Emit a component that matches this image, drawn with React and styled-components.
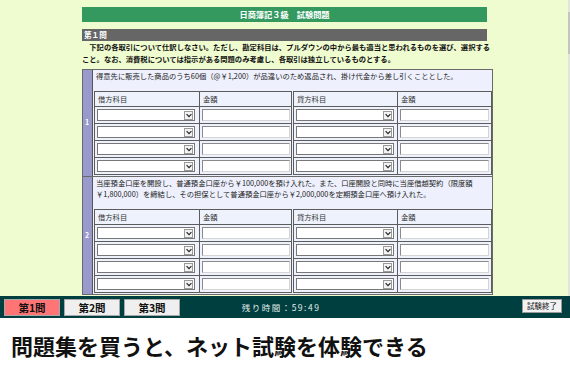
import React from "react";
import styled, { createGlobalStyle } from "styled-components";

const Global = createGlobalStyle`
  html, body { margin: 0; padding: 0; background: #ffffff; }
  body { font-family: "Noto Sans CJK JP", "Noto Sans", sans-serif; color: #111; }
  * { box-sizing: border-box; }
`;

const Page = styled.div`
  width: 570px;
  height: 370px;
  display: flex;
  flex-direction: column;
  overflow: hidden;
`;

const ExamWindow = styled.div`
  height: 296px;
  display: flex;
  background: #effcd0;
  overflow: hidden;
`;

const Main = styled.div`
  flex: 1;
  padding: 7px 0 0 82px;
  display: flex;
  flex-direction: column;
`;

const ScrollTrack = styled.div`
  width: 2px;
  background: #e2e4de;
  padding-top: 12px;
`;

const ScrollThumb = styled.div`
  height: 42px;
  background: #c4c4c4;
`;

const TitleBar = styled.div`
  width: 405px;
  height: 15px;
  background: #33995f;
  color: #fff;
  font-weight: 700;
  font-size: 8.2px;
  line-height: 15px;
  text-align: center;
  white-space: pre;
`;

const SectionBar = styled.div`
  width: 405px;
  height: 12px;
  margin-top: 7px;
  background: #666666;
  color: #fff;
  font-weight: 700;
  font-size: 7.6px;
  line-height: 12px;
  padding-left: 2px;
`;

const Instructions = styled.p`
  margin: 0;
  width: 402px;
  font-size: 7.3px;
  font-weight: 700;
  line-height: 12px;
  white-space: pre;
  color: #111;
`;

const QuestionList = styled.div`
  margin-top: 4px;
  width: 411px;
  border: 1px solid #6a6a6a;
  background: #eef1fd;
`;

const QuestionRow = styled.div`
  display: grid;
  grid-template-columns: 10px 1fr;
  & + & { border-top: 1px solid #6a6a6a; }
`;

const NumberCell = styled.div`
  background: #9999cc;
  border-right: 1px solid #555;
  color: #fff;
  font-weight: 700;
  font-size: 7px;
  display: flex;
  align-items: center;
  padding: 0 0 2px 2px;
`;

const QuestionBody = styled.div`
  padding: 1px;
`;

const QuestionText = styled.div`
  font-size: 7.3px;
  line-height: 11px;
  padding-left: 2px;
  white-space: nowrap;
  color: #222;
`;

const Table = styled.table`
  margin-top: 9px;
  width: 397px;
  border-collapse: collapse;
  table-layout: fixed;
`;

const Th = styled.th`
  height: 15px;
  padding: 0 0 0 3px;
  border: 1px solid #5c5c5c;
  border-left: ${(p) => (p.$split ? "3px double #5c5c5c" : "1px solid #5c5c5c")};
  background: #eef2fc;
  font-size: 7.3px;
  font-weight: 400;
  text-align: left;
  color: #333;
`;

const Td = styled.td`
  height: 17px;
  padding: 0 2px;
  border: 1px solid #5c5c5c;
  border-left: ${(p) => (p.$split ? "3px double #5c5c5c" : "1px solid #5c5c5c")};
  background: #eef2fc;
  vertical-align: middle;
`;

const SelectBox = styled.div`
  width: 98px;
  height: 12px;
  border: 1px solid #777;
  background: #fff;
  display: flex;
  justify-content: flex-end;
  align-items: center;
  padding-right: 1px;
`;

const ArrowBox = styled.div`
  width: 9px;
  height: 9px;
  border: 1px solid #9a9a9a;
  background: #f3f3f3;
  display: flex;
  align-items: center;
  justify-content: center;
`;

const InputBox = styled.div`
  width: ${(p) => p.$w}px;
  height: 12px;
  background: #fff;
  border: 1px solid;
  border-color: #8a8a8a #d4d4d4 #d4d4d4 #8a8a8a;
`;

const BottomBar = styled.div`
  height: 22px;
  background: #003f3f;
  display: grid;
  grid-template-columns: 1fr auto 1fr;
  align-items: start;
  padding: 3px 8px 0 4px;
`;

const TabGroup = styled.div`
  display: flex;
  gap: 4px;
`;

const TabButton = styled.div`
  width: 56px;
  height: 17px;
  background: ${(p) => (p.$active ? "#ff7575" : "#efefef")};
  border: 1px solid #a8a8a8;
  font-size: 10.5px;
  font-weight: 700;
  line-height: 15px;
  text-align: center;
  color: #111;
`;

const Timer = styled.div`
  color: #e4ecec;
  font-size: 8.5px;
  letter-spacing: 1.5px;
  line-height: 16px;
  margin-right: 4px;
`;

const EndButton = styled.div`
  justify-self: end;
  width: 40px;
  height: 14px;
  background: #f2f2f2;
  border: 1px solid #9a9a9a;
  font-size: 7.5px;
  line-height: 12px;
  text-align: center;
  color: #111;
`;

const Caption = styled.div`
  flex: 1;
  background: #fff;
  padding: 13px 0 0 11px;
  font-size: 22px;
  font-weight: 700;
  line-height: 28px;
  color: #111;
  white-space: nowrap;
`;

const Chevron = () => (
  <svg width="6" height="5" viewBox="0 0 6 5">
    <path d="M0.6 1.2 L3 3.6 L5.4 1.2" fill="none" stroke="#222" strokeWidth="1.2" />
  </svg>
);

const Select = () => (
  <SelectBox>
    <ArrowBox>
      <Chevron />
    </ArrowBox>
  </SelectBox>
);

const EntryTable = () => (
  <Table>
    <colgroup>
      <col style={{ width: 105 }} />
      <col style={{ width: 93 }} />
      <col style={{ width: 105 }} />
      <col style={{ width: 94 }} />
    </colgroup>
    <thead>
      <tr>
        <Th>借方科目</Th>
        <Th>金額</Th>
        <Th $split>貸方科目</Th>
        <Th>金額</Th>
      </tr>
    </thead>
    <tbody>
      {[0, 1, 2, 3].map((i) => (
        <tr key={i}>
          <Td><Select /></Td>
          <Td><InputBox $w={88} /></Td>
          <Td $split><Select /></Td>
          <Td><InputBox $w={89} /></Td>
        </tr>
      ))}
    </tbody>
  </Table>
);

const questions = [
  {
    n: "1",
    lines: ["得意先に販売した商品のうち60個（@￥1,200）が品違いのため返品され、掛け代金から差し引くこととした。"],
  },
  {
    n: "2",
    lines: [
      "当座預金口座を開設し、普通預金口座から￥100,000を預け入れた。また、口座開設と同時に当座借越契約（限度額",
      "￥1,800,000）を締結し、その担保として普通預金口座から￥2,000,000を定期預金口座へ預け入れた。",
    ],
  },
];

const instructionText =
  "\u3000下記の各取引について仕訳しなさい。ただし、勘定科目は、プルダウンの中から最も適当と思われるものを選び、選択する\n" +
  "こと。なお、消費税については指示がある問題のみ考慮し、各取引は独立しているものとする。";

export default function App() {
  return (
    <>
      <Global />
      <Page>
        <ExamWindow>
          <Main>
            <TitleBar>{"日商簿記３級\u3000試験問題"}</TitleBar>
            <SectionBar>第１問</SectionBar>
            <Instructions>{instructionText}</Instructions>
            <QuestionList>
              {questions.map((q) => (
                <QuestionRow key={q.n}>
                  <NumberCell>{q.n}</NumberCell>
                  <QuestionBody>
                    <QuestionText>
                      {q.lines.map((l, i) => (
                        <div key={i}>{l}</div>
                      ))}
                    </QuestionText>
                    <EntryTable />
                  </QuestionBody>
                </QuestionRow>
              ))}
            </QuestionList>
          </Main>
          <ScrollTrack>
            <ScrollThumb />
          </ScrollTrack>
        </ExamWindow>
        <BottomBar>
          <TabGroup>
            <TabButton $active>第1問</TabButton>
            <TabButton>第2問</TabButton>
            <TabButton>第3問</TabButton>
          </TabGroup>
          <Timer>残り時間：59:49</Timer>
          <EndButton>試験終了</EndButton>
        </BottomBar>
        <Caption>問題集を買うと、ネット試験を体験できる</Caption>
      </Page>
    </>
  );
}
